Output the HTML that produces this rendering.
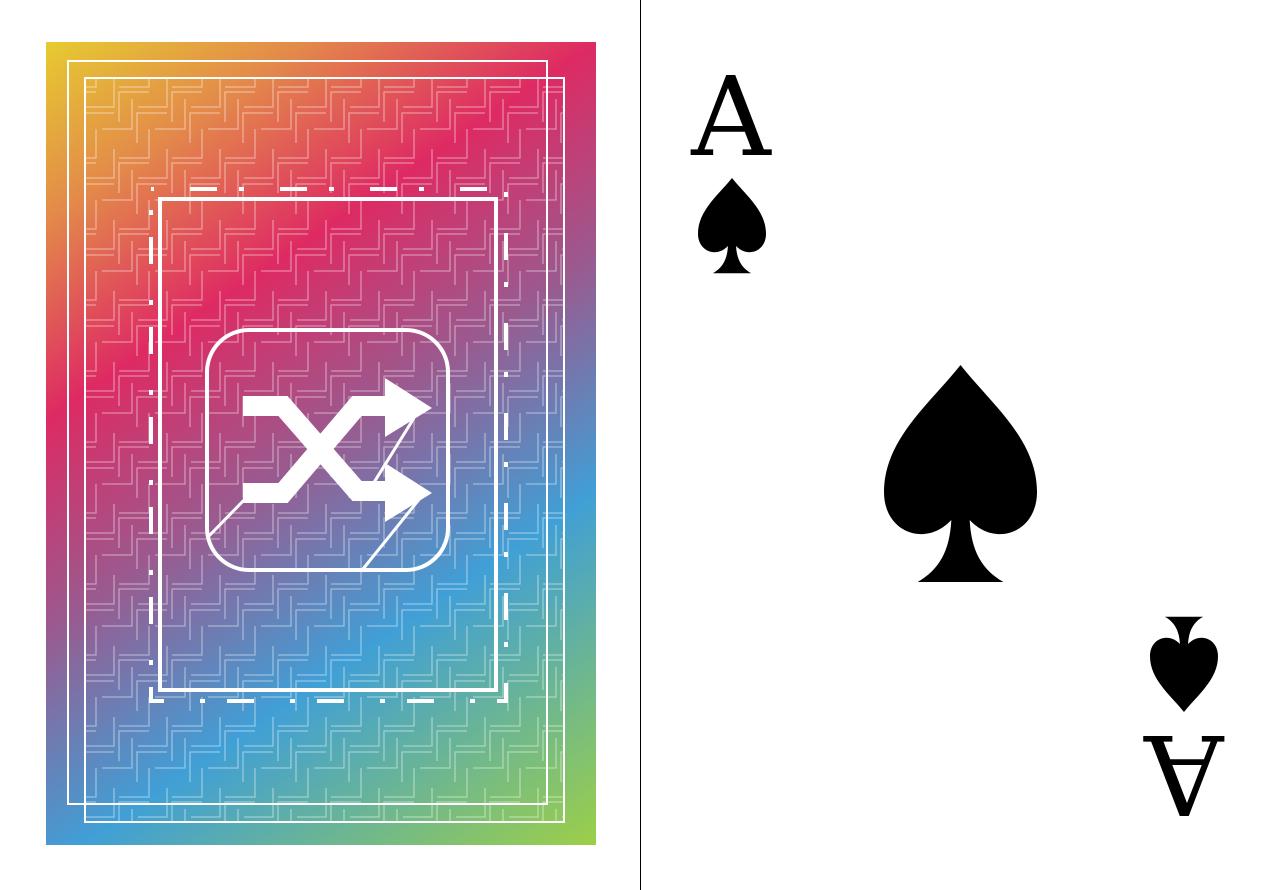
<!DOCTYPE html>
<html><head><meta charset="utf-8"><style>
html,body{margin:0;padding:0;background:#fff;width:1280px;height:890px;overflow:hidden}
svg{position:absolute;left:0;top:0}
</style></head><body>
<svg width="1280" height="890" viewBox="0 0 1280 890" xmlns="http://www.w3.org/2000/svg">
<defs>
<linearGradient id="g" x1="46" y1="42" x2="596" y2="845" gradientUnits="userSpaceOnUse">
<stop offset="0" stop-color="#e6cb30"/>
<stop offset="0.15" stop-color="#e38a4a"/>
<stop offset="0.32" stop-color="#de2a63"/>
<stop offset="0.5" stop-color="#9a5a8f"/>
<stop offset="0.7" stop-color="#409fd6"/>
<stop offset="1" stop-color="#9ccf48"/>
</linearGradient>
<g id="t" fill="none" stroke="#fff" stroke-opacity="0.42" stroke-width="1.3">
<path d="M29,0V29H0M64,14H34V44M47,21V51H17M82,35H52V65M64,51V80H34"/>
</g>
<pattern id="p" x="85" y="78" width="53" height="71" patternUnits="userSpaceOnUse">
<use href="#t"/><use href="#t" x="-53"/><use href="#t" y="-71"/><use href="#t" x="-53" y="-71"/>
</pattern>
<clipPath id="c"><rect x="85" y="78" width="479" height="744"/></clipPath>
<path id="sp" d="M50,0C30,25 0,48 0,82C0,108 27,118 44,100C43,120 36,132 22,140H78C64,132 57,120 56,100C73,118 100,108 100,82C100,48 70,25 50,0Z"/>
</defs>
<rect x="46" y="42" width="550" height="803" fill="url(#g)"/>
<rect x="85" y="78" width="479" height="744" fill="url(#p)" clip-path="url(#c)"/>
<rect x="68" y="61" width="479" height="743" fill="none" stroke="#fff" stroke-width="2"/>
<rect x="85" y="78" width="479" height="744" fill="none" stroke="#fff" stroke-width="2"/>
<rect x="151" y="189" width="355" height="512" fill="none" stroke="#fff" stroke-width="4" stroke-dasharray="5 36 27 22" stroke-dashoffset="2"/>
<rect x="160" y="199" width="336" height="491" fill="none" stroke="#fff" stroke-width="4"/>
<rect x="207" y="330" width="241" height="240" rx="42" fill="none" stroke="#fff" stroke-width="4"/>
<g fill="none" stroke="#fff">
<path d="M243,406H283L357,491H387M243,493H283L357,406H387" stroke-width="20" stroke-linejoin="miter"/>
<path d="M208,537L246,498M414,418L373,484M421,497L363,569" stroke-width="3"/>
</g>
<g fill="#fff">
<path d="M385,378L432,408L385,437Z"/>
<path d="M385,463L432,493L385,522Z"/>
</g>
<line x1="640.5" y1="0" x2="640.5" y2="890" stroke="#000" stroke-width="1"/>
<text x="731" y="155" font-family="DejaVu Serif, Liberation Serif, serif" font-size="110" text-anchor="middle" fill="#000">A</text>
<use href="#sp" transform="translate(698,178) scale(0.68,0.68)" fill="#000"/>
<use href="#sp" transform="translate(884,365) scale(1.53,1.55)" fill="#000"/>
<g transform="rotate(180 1184 718)">
<text x="1184" y="700" font-family="DejaVu Serif, Liberation Serif, serif" font-size="110" text-anchor="middle" fill="#000">A</text>
<use href="#sp" transform="translate(1150,724) scale(0.68,0.68)" fill="#000"/>
</g>
</svg>
</body></html>
